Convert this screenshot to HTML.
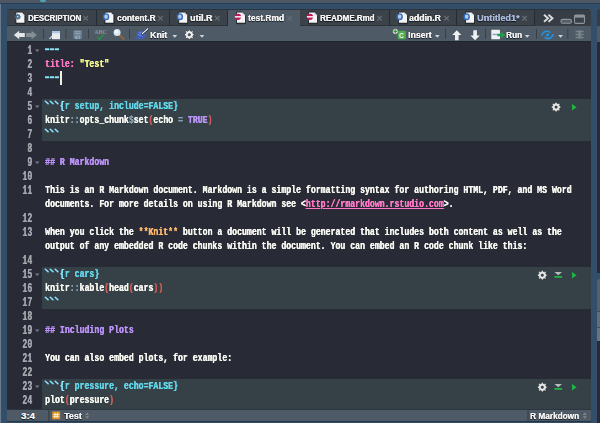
<!DOCTYPE html>
<html><head><meta charset="utf-8">
<style>
*{margin:0;padding:0;box-sizing:border-box}
html,body{width:600px;height:423px;overflow:hidden;background:#324e68;position:relative;font-family:"Liberation Sans",sans-serif}
.a{position:absolute}
.tab{position:absolute;top:9px;height:17px;background:#3b4249;border-right:1px solid #232b34;border-bottom:1px solid #2c3339}
.tt{position:absolute;font-size:9.5px;font-weight:bold;color:#f2f2f2;white-space:nowrap;line-height:10px;transform-origin:0 0;text-shadow:0.35px 0 0 currentColor,0 0.5px 1px #0b1016,0 0 1px #0b1016}
.sep{position:absolute;top:29px;width:1px;height:10px;background:#3a4148}
.ln{position:absolute;left:7px;width:25.2px;text-align:right;font-family:"Liberation Mono",monospace;font-size:12px;font-weight:bold;line-height:14px;color:#a4a6ad;margin-top:1.5px;transform:scaleX(0.683);transform-origin:100% 0;text-shadow:0.2px 0 0 currentColor}
.code{position:absolute;left:45px;font-family:"Liberation Mono",monospace;font-size:11.5px;font-weight:bold;line-height:14px;color:#f8f8f2;white-space:pre;transform:scaleX(0.713);transform-origin:0 0;margin-top:1.3px;text-shadow:0.45px 0 0 currentColor}
.chunk{position:absolute;left:42px;width:549px;background:#364147}
.cy{color:#8be9fd}.cy2{color:#62d6e8}.pk{color:#ff79c6}.yl{color:#f1fa8c}.pu{color:#bd93f9}.or{color:#ffb86c}.gr{color:#879db0}.rd{color:#c85c52}
</style></head><body>
<!-- top strip -->
<div class="a" style="left:0;top:0;width:600px;height:3px;background:#4e5864"></div>
<div class="a" style="left:0;top:3px;width:600px;height:1px;background:#2a3f56"></div>
<div class="a" style="left:0;top:4px;width:1px;height:419px;background:#6a7d90"></div>
<!-- right neighbor strip -->
<div class="a" style="left:597px;top:9px;width:3px;height:17px;background:#373c44;border-radius:3px 0 0 0"></div>
<div class="a" style="left:597px;top:26px;width:3px;height:16px;background:#4e5b66"></div>
<div class="a" style="left:597px;top:42px;width:3px;height:231px;background:#282a36"></div>
<div class="a" style="left:597px;top:279px;width:3px;height:32px;background:#56606a;border-radius:3px 0 0 0"></div>
<div class="a" style="left:597px;top:312px;width:3px;height:15px;background:#646e78"></div>
<div class="a" style="left:597px;top:328px;width:3px;height:13px;background:#6a747e"></div>
<div class="a" style="left:597px;top:341px;width:3px;height:82px;background:#282a36"></div>
<!-- main pane -->
<div class="a" style="left:7px;top:9px;width:584px;height:17px;background:#363d44;border-radius:3px 3px 0 0"></div>
<div class="tab" style="left:7px;width:90px;border-radius:3px 0 0 0"></div>
<div class="tab" style="left:97px;width:73px"></div>
<div class="tab" style="left:170px;width:58px"></div>
<div class="tab" style="left:228px;width:72px;background:#4e5b66;border:none"></div>
<div class="tab" style="left:300px;width:90px"></div>
<div class="tab" style="left:390px;width:67px"></div>
<div class="tab" style="left:457px;width:78px"></div>
<div class="a" style="left:9px;top:9px;width:580px;height:1px;background:#2b343d"></div>
<!-- toolbar -->
<div class="a" style="left:7px;top:26px;width:584px;height:15px;background:#4e5b66"></div>
<div class="a" style="left:7px;top:41px;width:584px;height:1px;background:#1f232b"></div>
<!-- editor -->
<div class="a" style="left:7px;top:42px;width:584px;height:367px;background:#282a36"></div>
<div class="chunk" style="top:99px;height:42px"></div>
<div class="chunk" style="top:267px;height:42px"></div>
<div class="chunk" style="top:379px;height:30px"></div>
<!-- status bar -->
<div class="a" style="left:7px;top:409px;width:584px;height:1px;background:#2c3540"></div>
<div class="a" style="left:7px;top:410px;width:584px;height:11px;background:#4e5b66"></div>
<div class="a" style="left:7px;top:421px;width:584px;height:1px;background:#253446"></div>

<!-- tab texts -->
<span class="tt" style="left:28px;top:13px;transform:scaleX(0.817)">DESCRIPTION</span>
<span class="tt" style="left:117px;top:13px;transform:scaleX(0.877)">content.R</span>
<span class="tt" style="left:190px;top:13px;transform:scaleX(0.937)">util.R</span>
<span class="tt" style="left:248px;top:13px;transform:scaleX(0.885)">test.Rmd</span>
<span class="tt" style="left:320px;top:13px;transform:scaleX(0.837)">README.Rmd</span>
<span class="tt" style="left:409px;top:13px;transform:scaleX(0.911)">addin.R</span>
<span class="tt" style="left:477px;top:13px;color:#a9b8d8;transform:scaleX(0.957)">Untitled1*</span>
<!-- toolbar texts -->
<span class="tt" style="left:150px;top:30px;transform:scaleX(0.92)">Knit</span>
<span class="tt" style="left:408px;top:30px;transform:scaleX(0.907)">Insert</span>
<span class="tt" style="left:506px;top:30px;transform:scaleX(0.86)">Run</span>
<!-- status texts -->
<span class="tt" style="left:21px;top:410.5px">3:4</span>
<span class="tt" style="left:64px;top:410.5px;transform:scaleX(0.936)">Test</span>
<span class="tt" style="left:530px;top:410.5px;transform:scaleX(0.867)">R Markdown</span>

<!-- gutter -->
<div class="ln" style="top:42px">1</div>
<div class="ln" style="top:56px">2</div>
<div class="ln" style="top:70px">3</div>
<div class="ln" style="top:84px">4</div>
<div class="ln" style="top:98px">5</div>
<div class="ln" style="top:112px">6</div>
<div class="ln" style="top:126px">7</div>
<div class="ln" style="top:140px">8</div>
<div class="ln" style="top:154px">9</div>
<div class="ln" style="top:168px">10</div>
<div class="ln" style="top:182px">11</div>
<div class="ln" style="top:210px">12</div>
<div class="ln" style="top:224px">13</div>
<div class="ln" style="top:252px">14</div>
<div class="ln" style="top:266px">15</div>
<div class="ln" style="top:280px">16</div>
<div class="ln" style="top:294px">17</div>
<div class="ln" style="top:308px">18</div>
<div class="ln" style="top:322px">19</div>
<div class="ln" style="top:336px">20</div>
<div class="ln" style="top:350px">21</div>
<div class="ln" style="top:364px">22</div>
<div class="ln" style="top:378px">23</div>
<div class="ln" style="top:392px">24</div>
<!-- code -->
<div class="code" style="top:56px"><span class="pk">title:</span> <span class="yl">"Test"</span></div>
<div class="code" style="top:98px"><span class="cy">   {</span><span class="cy2">r setup, include=FALSE}</span></div>
<div class="code" style="top:112px">knitr<span class="gr">::</span>opts_chunk<span class="gr">$</span>set<span class="rd">(</span>echo <span class="gr">=</span> <span class="pu">TRUE</span><span class="rd">)</span></div>
<div class="code" style="top:126px"></div>
<div class="code" style="top:154px"><span class="pu">## R Markdown</span></div>
<div class="code" style="top:182px">This is an R Markdown document. Markdown is a simple formatting syntax for authoring HTML, PDF, and MS Word</div>
<div class="code" style="top:196px">documents. For more details on using R Markdown see &lt;<span class="pk" style="text-decoration:underline">http://rmarkdown.rstudio.com</span>&gt;.</div>
<div class="code" style="top:224px">When you click the <span class="or">**Knit**</span> button a document will be generated that includes both content as well as the</div>
<div class="code" style="top:238px">output of any embedded R code chunks within the document. You can embed an R code chunk like this:</div>
<div class="code" style="top:266px"><span class="cy">   {</span><span class="cy2">r cars}</span></div>
<div class="code" style="top:280px">knitr<span class="gr">::</span>kable<span class="rd">(</span>head<span class="rd">(</span>cars<span class="rd">))</span></div>
<div class="code" style="top:294px"></div>
<div class="code" style="top:322px"><span class="pu">## Including Plots</span></div>
<div class="code" style="top:350px">You can also embed plots, for example:</div>
<div class="code" style="top:378px"><span class="cy">   {</span><span class="cy2">r pressure, echo=FALSE}</span></div>
<div class="code" style="top:392px">plot<span class="rd">(</span>pressure<span class="rd">)</span></div>

<!-- icons overlay -->
<svg class="a" style="left:0;top:0" width="600" height="423" viewBox="0 0 600 423">
<defs>
<g id="pg"><rect x="0.3" y="11" width="9.4" height="1.3" fill="#0a0f14"/><path d="M0.5,0.3 H6.6 L9.5,3.2 V11.4 H0.5 Z" fill="#f5f5f5" stroke="#0e141b" stroke-width="0.8"/><path d="M6.6,0.6 V3.2 H9.3" fill="none" stroke="#c8ccd0" stroke-width="0.5"/></g>
<g id="rb"><use href="#pg"/><ellipse cx="1.7" cy="4.9" rx="2.5" ry="2.8" fill="#b9c9e0" stroke="#2f6cc0" stroke-width="1.4"/></g>
<g id="mb"><use href="#pg"/><circle cx="2" cy="5" r="3.1" fill="#c3155a"/><rect x="-1.1" y="4.2" width="6.2" height="1.6" fill="#f0e6ea"/></g>
<path id="x" d="M0,0 L4.5,4.5 M4.5,0 L0,4.5" stroke="#656d75" stroke-width="1.1" fill="none"/>
<path id="dd" d="M-0.4,-0.3 H4.4 L2,2.5 Z" fill="#d0d4d8"/>
<path id="gear" d="M-0.96,-3.73 L-0.65,-4.86 L0.65,-4.86 L0.96,-3.73 L1.96,-3.31 L2.97,-3.90 L3.90,-2.97 L3.31,-1.96 L3.73,-0.96 L4.86,-0.65 L4.86,0.65 L3.73,0.96 L3.31,1.96 L3.90,2.97 L2.97,3.90 L1.96,3.31 L0.96,3.73 L0.65,4.86 L-0.65,4.86 L-0.96,3.73 L-1.96,3.31 L-2.97,3.90 L-3.90,2.97 L-3.31,1.96 L-3.73,0.96 L-4.86,0.65 L-4.86,-0.65 L-3.73,-0.96 L-3.31,-1.96 L-3.90,-2.97 L-2.97,-3.90 L-1.96,-3.31 Z M1.2,0 A1.2,1.2 0 1 0 -1.2,0 A1.2,1.2 0 1 0 1.2,0 Z" fill-rule="evenodd"/>
</defs>
<ellipse cx="43" cy="0.6" rx="3" ry="1.6" fill="#4aa0b8"/>
<!-- tab icons -->
<g transform="translate(15.4,11.8)"><use href="#pg"/><use href="#gear" transform="translate(2.4,5) scale(0.62)" fill="#4a7090"/></g>
<g transform="translate(104.4,11.8)"><use href="#rb"/></g>
<g transform="translate(178.2,11.8)"><use href="#rb"/></g>
<g transform="translate(236,11.8)"><use href="#mb"/></g>
<g transform="translate(308,11.8)"><use href="#mb"/></g>
<g transform="translate(398,11.8)"><use href="#rb"/></g>
<g transform="translate(465,11.8)"><use href="#rb"/></g>
<!-- close x -->
<use href="#x" x="83.5" y="16"/>
<use href="#x" x="158.2" y="16"/>
<use href="#x" x="215" y="16"/>
<use href="#x" x="287.3" y="16"/>
<use href="#x" x="377.3" y="16"/>
<use href="#x" x="444.3" y="16"/>
<use href="#x" x="522.3" y="16"/>
<!-- >> -->
<path d="M544,14.8 L548,18.3 L544,21.8 M548.5,14.8 L552.5,18.3 L548.5,21.8" stroke="#d9dcdf" stroke-width="1.9" fill="none"/>
<!-- min / max -->
<rect x="561" y="19.4" width="10.4" height="3.9" rx="1.6" fill="#575e65" stroke="#8d959b" stroke-width="1.1"/>
<rect x="574.5" y="15" width="10" height="8.4" rx="1.4" fill="#3b4148" stroke="#8d959b" stroke-width="1.1"/>
<rect x="574.5" y="15" width="10" height="2.6" fill="#8d959b"/>
<!-- toolbar: back/forward -->
<path d="M13.8,35 L19.2,30.8 V33 H24.8 V37 H19.2 V39.2 Z" fill="#e4e6e8"/>
<path d="M37,35 L31.6,30.8 V33 H26.2 V37 H31.6 V39.2 Z" fill="#858d95"/>
<!-- separators -->
<rect x="43" y="28.8" width="1" height="10" fill="#394047"/>
<rect x="65.5" y="28.8" width="1" height="10" fill="#394047"/>
<rect x="88" y="28.8" width="1" height="10" fill="#394047"/>
<rect x="129" y="28.8" width="1" height="10" fill="#394047"/>
<rect x="445" y="28.8" width="1" height="10" fill="#394047"/>
<rect x="485" y="28.8" width="1" height="10" fill="#394047"/>
<rect x="536" y="28.8" width="1" height="10" fill="#394047"/>
<rect x="567.3" y="28.8" width="1" height="10" fill="#394047"/>
<!-- show in new window -->
<rect x="52" y="31" width="8" height="8.2" fill="#e8ecef"/>
<rect x="52" y="31" width="8" height="2.2" fill="#a9c6e6"/>
<path d="M49.5,38.8 L53.5,35" stroke="#e8ecef" stroke-width="1.1"/>
<!-- save disabled -->
<rect x="73.4" y="30.3" width="8.4" height="8.8" rx="0.8" fill="#6c8194"/>
<rect x="74.6" y="31.2" width="6" height="1" fill="#8fa2b3"/>
<rect x="74.6" y="33" width="6" height="1" fill="#8fa2b3"/>
<rect x="75.2" y="35.6" width="4.8" height="3.5" fill="#90a3b4"/>
<rect x="77.5" y="36.2" width="1.2" height="2.6" fill="#6c8194"/>
<!-- ABC check -->
<text x="94.2" y="33.8" font-family="Liberation Serif" font-size="5.6" font-weight="bold" fill="#8d959c" textLength="12.6" lengthAdjust="spacingAndGlyphs">ABC</text>
<path d="M97.6,37 L99.6,39.3 L103.6,34.3" stroke="#1c9a3a" stroke-width="1.3" fill="none"/>
<!-- magnifier -->
<path d="M119.8,35.2 L123.6,39" stroke="#a8602a" stroke-width="1.7" stroke-linecap="round"/>
<circle cx="117.1" cy="32.6" r="3.5" fill="#d6e6f4"/>
<circle cx="116.3" cy="31.8" r="1.8" fill="#f2f8fc"/>
<!-- knit -->
<circle cx="140.9" cy="35.1" r="4.2" fill="#4664c4"/>
<circle cx="140.2" cy="34" r="2.2" fill="#5c7ad6"/>
<path d="M137.6,32.8 Q140.5,35.6 144,34.8 M137.2,35.8 Q140,38.3 143.6,37.6" stroke="#3350a8" stroke-width="0.6" fill="none"/>
<path d="M137,37.6 Q135.5,37 134.6,38.6 Q135.8,39.6 137.4,39" stroke="#3b5cc0" stroke-width="0.9" fill="none"/>
<path d="M142.4,33.6 L147.8,28.8" stroke="#1a2230" stroke-width="2.3" stroke-linecap="round"/>
<path d="M142.4,33.6 L147.8,28.8" stroke="#e4e8ec" stroke-width="1.3" stroke-linecap="round"/>
<use href="#dd" x="172.8" y="35.2"/>
<!-- gear -->
<use href="#gear" transform="translate(189.3,34.7)" fill="#f2f2f2" stroke="#20262c" stroke-width="0.5"/>
<use href="#dd" x="200" y="35.2"/>
<!-- insert -->
<rect x="397.8" y="30.8" width="8" height="8.5" rx="1.3" fill="#4fae4f"/>
<text x="399.1" y="38.3" font-family="Liberation Sans" font-size="6.5" font-weight="bold" fill="#e8f4e8">C</text>
<circle cx="395.4" cy="31.4" r="2.9" fill="#e6ebe6" stroke="#1a2026" stroke-width="0.5"/>
<path d="M393.6,31.4 H397.2 M395.4,29.6 V33.2" stroke="#22a03a" stroke-width="1.3"/>
<use href="#dd" x="435.3" y="35.2"/>
<!-- up / down -->
<path d="M456.8,30.3 L461.4,35 H458.6 V40.2 H455 V35 H452.2 Z" fill="#f0f1f2"/>
<path d="M475.1,40.2 L479.7,35.5 H476.9 V30.3 H473.3 V35.5 H470.5 Z" fill="#f0f1f2"/>
<!-- run -->
<rect x="491.3" y="29.8" width="8.7" height="9.4" rx="0.6" fill="#eef0f2"/>
<rect x="492.6" y="33.8" width="4.8" height="1.3" fill="#7aa0d0"/>
<path d="M497.3,33.7 H501.2 V31.6 L505.3,35 L501.2,38.4 V36.3 H497.3 Z" fill="#1f9e48"/>
<use href="#dd" x="525.2" y="35.2"/>
<!-- sync -->
<path d="M541.8,35 C543,32.5 545,31.2 547,31.2 C548.3,31.2 549.2,31.6 549.8,32.2" stroke="#2591e0" stroke-width="1.6" fill="none" stroke-linecap="round"/>
<path d="M553.2,34.6 C552,37 550,38.6 548,38.6 C546.7,38.6 545.8,38.2 545.2,37.6" stroke="#2591e0" stroke-width="1.6" fill="none" stroke-linecap="round"/>
<circle cx="547.6" cy="34.8" r="1.6" fill="#2591e0"/>
<use href="#dd" x="558.6" y="35.2"/>
<!-- outline icon -->
<path d="M575.5,31.5 H583.5 M575.5,34.5 H583.5 M575.5,37.5 H583.5" stroke="#7a838b" stroke-width="1.4"/>
<rect x="578.5" y="30.5" width="2.4" height="8" fill="#7a838b"/>
<!-- fold arrows -->
<path d="M35,49.5 H39.4 L37.2,52 Z" fill="#7d8088"/>
<path d="M35,105.5 H39.4 L37.2,108 Z" fill="#7d8088"/>
<path d="M35,161.5 H39.4 L37.2,164 Z" fill="#7d8088"/>
<path d="M35,273.5 H39.4 L37.2,276 Z" fill="#7d8088"/>
<path d="M35,329.5 H39.4 L37.2,332 Z" fill="#7d8088"/>
<path d="M35,385.5 H39.4 L37.2,388 Z" fill="#7d8088"/>
<!-- yaml dashes -->
<g fill="#8be9fd"><rect x="45" y="48.3" width="4.2" height="1.9"/><rect x="49.9" y="48.3" width="4.2" height="1.9"/><rect x="54.8" y="48.3" width="4.2" height="1.9"/>
<rect x="45" y="76.3" width="4.2" height="1.9"/><rect x="49.9" y="76.3" width="4.2" height="1.9"/><rect x="54.8" y="76.3" width="4.2" height="1.9"/></g>
<path d="M45.4,101.2 L48.1,103.8 M50.3,101.2 L53.0,103.8 M55.2,101.2 L57.9,103.8 M45.4,129.2 L48.1,131.8 M50.3,129.2 L53.0,131.8 M55.2,129.2 L57.9,131.8 M45.4,269.2 L48.1,271.8 M50.3,269.2 L53.0,271.8 M55.2,269.2 L57.9,271.8 M45.4,297.2 L48.1,299.8 M50.3,297.2 L53.0,299.8 M55.2,297.2 L57.9,299.8 M45.4,381.2 L48.1,383.8 M50.3,381.2 L53.0,383.8 M55.2,381.2 L57.9,383.8" stroke="#8be9fd" stroke-width="1.5" stroke-linecap="round" fill="none"/>
<!-- cursor -->
<rect x="60" y="71" width="2" height="14" fill="#f4f0e0"/>
<!-- chunk icons -->
<use href="#gear" transform="translate(556.1,107.1)" fill="#e6e6e6" stroke="#1c2226" stroke-width="0.5"/>
<path d="M572,103.8 L576.6,107.2 L572,110.6 Z" fill="#1fb344"/>
<use href="#gear" transform="translate(542.3,275.2)" fill="#e6e6e6" stroke="#1c2226" stroke-width="0.5"/>
<path d="M554.5,272 H562 L558.25,275.2 Z" fill="#b8bcc0"/>
<rect x="554.5" y="276" width="7.5" height="1.8" fill="#1fb344"/>
<path d="M572,271.8 L576.6,275.2 L572,278.6 Z" fill="#1fb344"/>
<use href="#gear" transform="translate(542.3,387.2)" fill="#e6e6e6" stroke="#1c2226" stroke-width="0.5"/>
<path d="M554.5,384 H562 L558.25,387.2 Z" fill="#b8bcc0"/>
<rect x="554.5" y="388" width="7.5" height="1.8" fill="#1fb344"/>
<path d="M572,383.8 L576.6,387.2 L572,390.6 Z" fill="#1fb344"/>
<!-- status icons -->
<rect x="48.3" y="410" width="1" height="11" fill="#333b43"/>
<rect x="527.5" y="410" width="1" height="11" fill="#333b43"/>
<rect x="52.2" y="411.6" width="8" height="7.6" rx="0.9" fill="#e0982a"/>
<path d="M55.2,412.9 L54.6,417.9 M57.6,412.9 L57,417.9 M53.6,414.5 H59 M53.4,416.4 H58.8" stroke="#fff6e6" stroke-width="0.9" fill="none"/>
<path d="M85.2,415.1 L87.2,412.6 L89.2,415.1 Z M85.2,416.2 L87.2,418.7 L89.2,416.2 Z" fill="#7f878e"/>
<path d="M582.8,415.1 L584.8,412.6 L586.8,415.1 Z M582.8,416.2 L584.8,418.7 L586.8,416.2 Z" fill="#7f878e"/>
</svg>
</body></html>
